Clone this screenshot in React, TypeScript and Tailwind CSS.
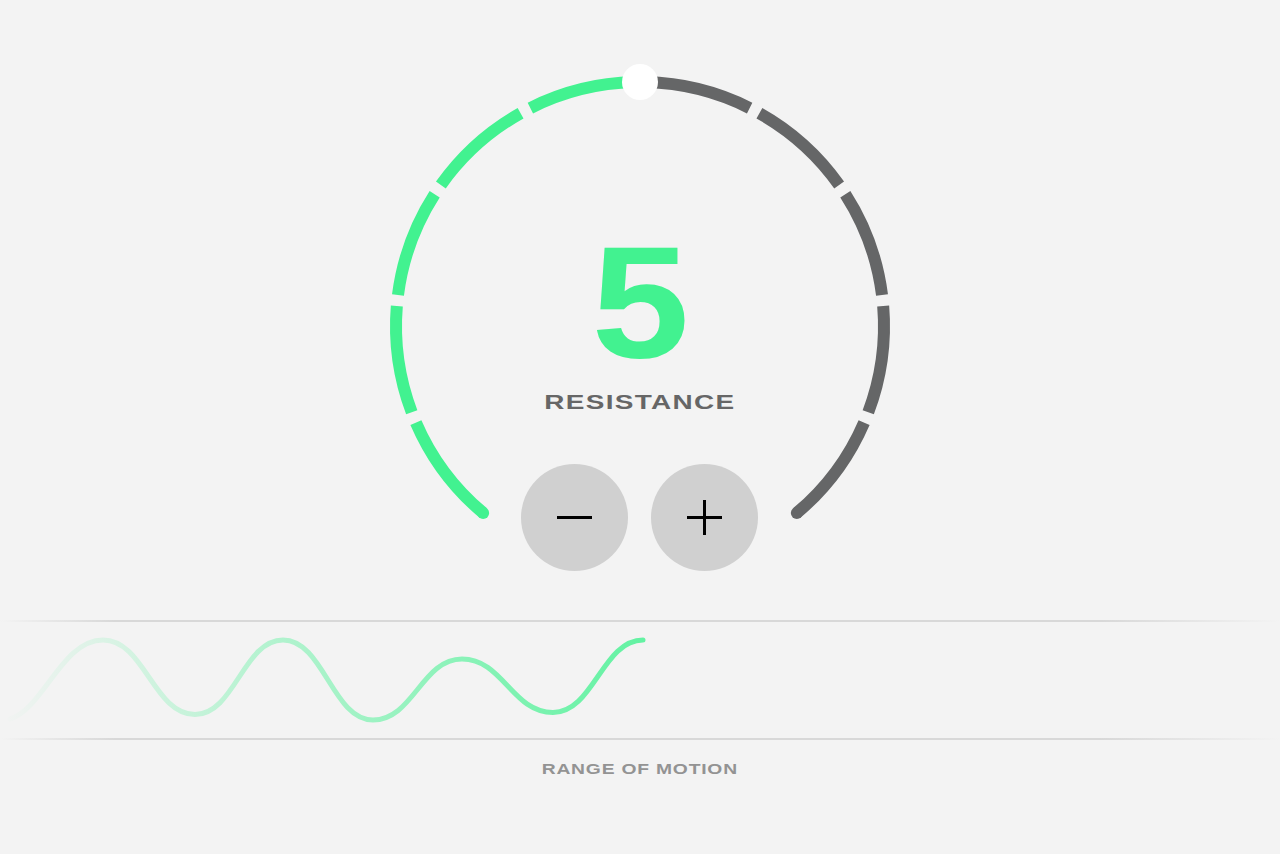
import { useState } from "react";

// dial geometry (svg units = px)
const CX = 260;
const CY = 266;
const R = 244;
const STEPS = 10;
const START = -140;
const STEP_DEG = 28;
const GAP = 1.3;

const polar = (deg: number) => {
  const rad = (deg * Math.PI) / 180;
  return [CX + R * Math.sin(rad), CY - R * Math.cos(rad)];
};

const arc = (from: number, to: number) => {
  const [x0, y0] = polar(from);
  const [x1, y1] = polar(to);
  return `M ${x0} ${y0} A ${R} ${R} 0 0 1 ${x1} ${y1}`;
};

const DialRing = ({ level }: { level: number }) => {
  const knob = polar(START + STEP_DEG * level);
  const [lx, ly] = polar(START);
  const [rx, ry] = polar(START + STEP_DEG * STEPS);

  return (
    <svg width="520" height="470" viewBox="0 0 520 470" className="absolute top-0 left-0">
      {Array.from({ length: STEPS }).map((_, i) => {
        const a0 = START + STEP_DEG * i;
        const a1 = a0 + STEP_DEG;
        const from = i === 0 ? a0 : a0 + GAP;
        const to = i === STEPS - 1 ? a1 : a1 - GAP;
        return (
          <path
            key={i}
            d={arc(from, to)}
            fill="none"
            stroke={i < level ? "#42f290" : "#656667"}
            strokeWidth="12"
          />
        );
      })}
      {/* rounded ends */}
      <circle cx={lx} cy={ly} r="6" fill={level > 0 ? "#42f290" : "#656667"} />
      <circle cx={rx} cy={ry} r="6" fill={level >= STEPS ? "#42f290" : "#656667"} />
      <circle cx={knob[0]} cy={knob[1]} r="18" fill="#ffffff" />
    </svg>
  );
};

const RoundButton = ({ plus, onClick }: { plus?: boolean; onClick: () => void }) => (
  <button
    onClick={onClick}
    className="w-[107px] h-[107px] rounded-full bg-[#d0d0d0] flex items-center justify-center"
  >
    <svg width="35" height="35" viewBox="0 0 35 35">
      <line x1="0" y1="17.5" x2="35" y2="17.5" stroke="#000" strokeWidth="3" />
      {plus && <line x1="17.5" y1="0" x2="17.5" y2="35" stroke="#000" strokeWidth="3" />}
    </svg>
  </button>
);

// wave: peaks and troughs, y in band coords
const wavePoints: [number, number][] = [
  [103, 18],
  [195, 92.5],
  [283, 18],
  [373, 98],
  [462, 37],
  [553, 90.5],
  [643, 18],
];

const buildWave = () => {
  let d = `M 10 97 C 44 86, 62 18, 103 18`;
  for (let i = 1; i < wavePoints.length; i++) {
    const [x0, y0] = wavePoints[i - 1];
    const [x1, y1] = wavePoints[i];
    const k = (x1 - x0) * 0.45;
    d += ` C ${x0 + k} ${y0}, ${x1 - k} ${y1}, ${x1} ${y1}`;
  }
  return d;
};

const Rule = () => (
  <div className="h-[2px] w-full bg-[linear-gradient(90deg,transparent_0%,#d8d8d8_9%,#d8d8d8_86%,transparent_100%)]" />
);

export default function App() {
  const [level, setLevel] = useState(5);

  return (
    <div className="min-h-screen w-full bg-[#f3f3f3] flex flex-col items-center pt-[60px] font-['Liberation_Sans',Arial,sans-serif]">
      {/* Resistance dial */}
      <div className="relative w-[520px] flex flex-col items-center pt-[162px]">
        <DialRing level={level} />
        <div className="relative text-[160px] leading-none font-bold text-[#42f290] scale-x-[1.1]">
          {level}
        </div>
        <div className="relative mt-[9px] text-[21px] leading-none font-bold text-[#666666] tracking-[1px] scale-x-[1.33]">
          RESISTANCE
        </div>
        <div className="relative mt-[52px] flex gap-[23px] -translate-x-px">
          <RoundButton onClick={() => setLevel((l) => Math.max(0, l - 1))} />
          <RoundButton plus onClick={() => setLevel((l) => Math.min(STEPS, l + 1))} />
        </div>
      </div>

      {/* Range of motion */}
      <div className="w-full mt-[49px] flex flex-col">
        <Rule />
        <svg width="1280" height="116" viewBox="0 0 1280 116" className="block">
          <defs>
            <linearGradient id="romStroke" gradientUnits="userSpaceOnUse" x1="0" y1="0" x2="650" y2="0">
              <stop offset="0" stopColor="#42f290" stopOpacity="0" />
              <stop offset="0.4" stopColor="#42f290" stopOpacity="0.35" />
              <stop offset="1" stopColor="#42f290" stopOpacity="0.82" />
            </linearGradient>
          </defs>
          <path d={buildWave()} fill="none" stroke="url(#romStroke)" strokeWidth="5" strokeLinecap="round" />
        </svg>
        <Rule />
      </div>
      <div className="mt-[22px] text-[14.5px] leading-none font-bold text-[#939393] tracking-[0.6px] scale-x-[1.33]">
        RANGE OF MOTION
      </div>
    </div>
  );
}
